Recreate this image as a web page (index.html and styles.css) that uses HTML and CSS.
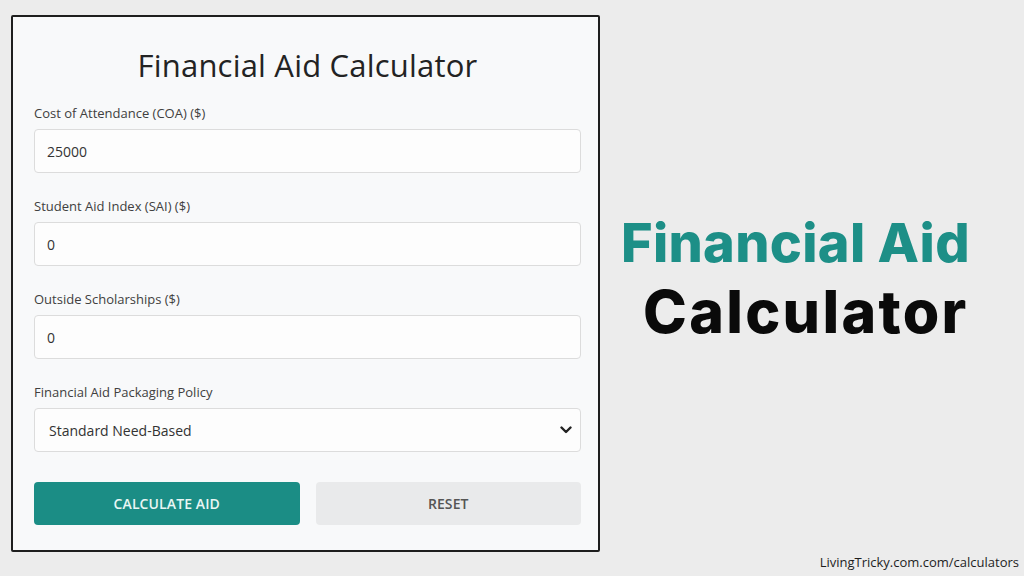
FILE: index.html
```html
<!DOCTYPE html>
<html lang="en">
<head>
<meta charset="utf-8">
<title>Financial Aid Calculator</title>
<link rel="stylesheet" href="styles.css">
</head>
<body>
<div class="page">
  <form class="card">
    <h1 class="card-title">Financial Aid Calculator</h1>
    <div class="field">
      <label class="field-label">Cost of Attendance (COA) ($)</label>
      <div class="field-input">25000</div>
    </div>
    <div class="field">
      <label class="field-label">Student Aid Index (SAI) ($)</label>
      <div class="field-input">0</div>
    </div>
    <div class="field">
      <label class="field-label">Outside Scholarships ($)</label>
      <div class="field-input">0</div>
    </div>
    <div class="field">
      <label class="field-label">Financial Aid Packaging Policy</label>
      <div class="field-input field-select">
        <span class="select-text">Standard Need-Based</span>
        <svg class="chevron" width="12" height="8" viewBox="0 0 12 8"><path d="M1.5 1.5 L6 6 L10.5 1.5" fill="none" stroke="#222" stroke-width="2.4" stroke-linecap="round" stroke-linejoin="round"/></svg>
      </div>
    </div>
    <div class="actions">
      <div class="btn btn-primary">CALCULATE AID</div>
      <div class="btn btn-secondary">RESET</div>
    </div>
  </form>
  <div class="hero">
    <div class="hero-line1">Financial Aid</div>
    <div class="hero-line2">Calculator</div>
  </div>
</div>
<div class="footer-credit">LivingTricky.com.com/calculators</div>
</body>
</html>
```
FILE: styles.css
```css
* { box-sizing: border-box; }
html, body {
  margin: 0;
  padding: 0;
  width: 1024px;
  height: 576px;
  overflow: hidden;
  background: #ececec;
  font-family: "Open Sans", "Noto Sans", sans-serif;
}
.page {
  display: flex;
  align-items: flex-start;
  padding: 15px 0 0 11px;
  height: 576px;
}
.card {
  width: 589px;
  height: 537px;
  background: #f8f9fa;
  border: 2.5px solid #1e1e1e;
  border-radius: 2px;
  padding: 0 17px 0 21px;
  display: flex;
  flex-direction: column;
  margin: 0;
}
.card-title {
  margin: 26px 0 0;
  height: 44px;
  line-height: 44px;
  text-align: center;
  font-weight: 400;
  font-size: 31px;
  letter-spacing: 0.2px;
  color: #232323;
}
.field {
  display: flex;
  flex-direction: column;
  margin-top: 17px;
}
.field + .field { margin-top: 24px; }
.field-label {
  height: 18px;
  line-height: 18px;
  font-size: 13px;
  color: #404040;
  margin-bottom: 7px;
}
.field-input {
  height: 44px;
  background: #fdfdfd;
  border: 1px solid #dcdcdc;
  border-radius: 4px;
  padding: 0 12px;
  display: flex;
  align-items: center;
  font-size: 14px;
  color: #333;
}
.field-select {
  justify-content: space-between;
  padding: 0 8px 0 14px;
}
.chevron { display: block; }
.actions {
  display: grid;
  grid-template-columns: 1fr 1fr;
  gap: 16px;
  margin-top: 30px;
}
.btn {
  height: 43px;
  border-radius: 4px;
  display: flex;
  align-items: center;
  justify-content: center;
  font-size: 14px;
  font-weight: 600;
  letter-spacing: 0.1px;
}
.btn-primary {
  background: #1b8d85;
  color: #e9f6f4;
}
.btn-secondary {
  background: #e9eaeb;
  color: #555;
}
.hero {
  flex: 1;
  display: flex;
  flex-direction: column;
  align-items: flex-start;
  margin-top: 193px;
  padding-left: 21px;
}
.hero-line1 {
  font-family: "Inter", sans-serif;
  font-weight: 800;
  font-size: 54px;
  line-height: 70px;
  color: #1d8f87;
  letter-spacing: 0.3px;
}
.hero-line2 {
  font-family: "Inter", sans-serif;
  font-weight: 800;
  font-size: 59px;
  line-height: 68px;
  color: #0a0a0a;
  margin-left: 22px;
  letter-spacing: 2.3px;
}
.footer-credit {
  position: absolute;
  right: 5px;
  bottom: 5px;
  font-size: 13px;
  color: #1e1e1e;
}
```
